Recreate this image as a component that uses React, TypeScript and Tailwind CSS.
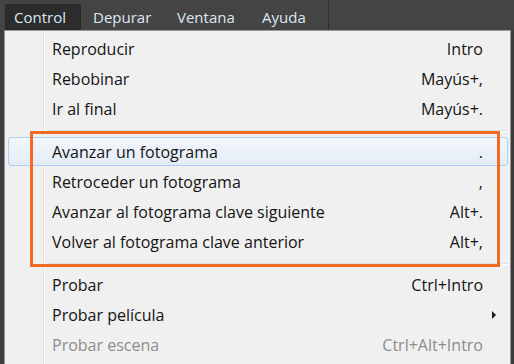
import React from "react";

type Item = { label: string; shortcut?: string; disabled?: boolean; sub?: boolean; hl?: boolean } | "sep";

const items: Item[] = [
  { label: "Reproducir", shortcut: "Intro" },
  { label: "Rebobinar", shortcut: "Mayús+," },
  { label: "Ir al final", shortcut: "Mayús+." },
  "sep",
  { label: "Avanzar un fotograma", shortcut: ".", hl: true },
  { label: "Retroceder un fotograma", shortcut: "," },
  { label: "Avanzar al fotograma clave siguiente", shortcut: "Alt+." },
  { label: "Volver al fotograma clave anterior", shortcut: "Alt+," },
  "sep",
  { label: "Probar", shortcut: "Ctrl+Intro" },
  { label: "Probar película", sub: true },
  { label: "Probar escena", shortcut: "Ctrl+Alt+Intro", disabled: true },
];

export default function App() {
  return (
    <div
      className="w-[514px] h-[364px] overflow-hidden bg-[#3c3c3c] flex flex-col"
      style={{ fontFamily: '"Open Sans", "Noto Sans", sans-serif' }}
    >
      <div className="h-[30px] shrink-0 bg-[#444444] flex items-end pl-[5px] text-[15px] text-[#dce8f2]">
        <div className="h-[26px] w-[76px] bg-[#2c2c2c] border border-b-0 border-[#262626] rounded-t-[2px] flex items-center pl-[8px]">
          Control
        </div>
        <div className="h-[26px] flex items-center pl-[12px] w-[96px]">Depurar</div>
        <div className="h-[26px] flex items-center w-[85px]">Ventana</div>
        <div className="h-[26px] flex items-center w-[66px]">Ayuda</div>
        <div className="h-[30px] w-px bg-[#2e2e2e]" />
      </div>
      <div className="relative ml-[4px] w-[507px] flex-1 bg-[#f0f0f0] border border-b-0 border-[#979797] pt-[3px] text-[16px] text-[#141414]">
        <div className="absolute left-[38px] top-0 bottom-0 w-px bg-[#e2e3e3]" />
        <div className="absolute left-[39px] top-0 bottom-0 w-px bg-[#ffffff]" />
        {items.map((it, i) =>
          it === "sep" ? (
            <div key={i} className="h-[13px] flex flex-col justify-center pl-[42px] pr-[2px]">
              <div className="h-px bg-[#e0e0e0]" />
              <div className="h-px bg-[#ffffff]" />
            </div>
          ) : (
            <div key={i} className="relative h-[30px] flex items-center">
              {it.hl && (
                <div className="absolute left-[3px] right-[2px] top-0 bottom-px rounded-[3px] border border-[#aecff7] bg-gradient-to-b from-[#f3f6fb] to-[#e3ecf7]" />
              )}
              <span className={"relative pl-[47px] flex-1 " + (it.disabled ? "text-[#8d8d8d]" : "")}>{it.label}</span>
              {it.shortcut && (
                <span className={"relative pr-[27px] " + (it.disabled ? "text-[#8d8d8d]" : "")}>{it.shortcut}</span>
              )}
              {it.sub && (
                <svg className="relative mr-[13px]" width="6" height="10" viewBox="0 0 6 10">
                  <path d="M1 1 L5 5 L1 9 Z" fill="#1a1a1a" />
                </svg>
              )}
            </div>
          )
        )}
        <div className="absolute left-[25px] top-[100px] w-[470px] h-[136px] border-[3px] border-[#f26b22] pointer-events-none" />
      </div>
    </div>
  );
}
